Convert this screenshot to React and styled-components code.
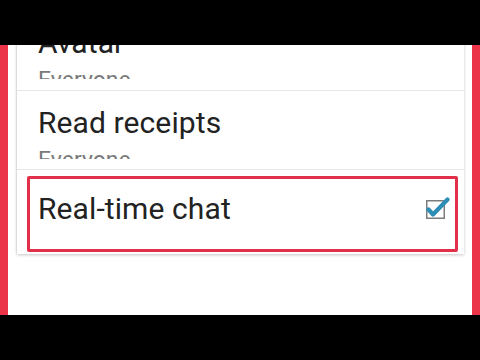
import React from "react";
import styled, { createGlobalStyle } from "styled-components";

const Global = createGlobalStyle`
  html, body {
    margin: 0;
    padding: 0;
    background: #000;
  }
  body {
    font-family: Roboto, "Noto Sans", sans-serif;
  }
`;

const Screen = styled.div`
  width: 480px;
  height: 360px;
  display: flex;
  flex-direction: column;
  background: #000;
  overflow: hidden;
`;

const BlackBar = styled.div`
  height: 45px;
  flex: none;
  background: #000;
`;

const Frame = styled.div`
  flex: 1;
  border-left: 8px solid #ec3448;
  border-right: 8px solid #ec3448;
  background: #fff;
  overflow: hidden;
  padding: 0 8px 0 9px;
`;

const Card = styled.div`
  margin-top: -34px;
  background: #fff;
  box-shadow: 0 1px 3px rgba(0, 0, 0, 0.22), -1px 0 1px rgba(0, 0, 0, 0.06);
  display: flex;
  flex-direction: column;
`;

const Row = styled.div`
  position: relative;
  display: flex;
  align-items: flex-start;
  justify-content: space-between;
  height: ${(p) => p.$height}px;
  padding: ${(p) => p.$top}px 14px 0 21px;
  box-sizing: border-box;
  border-bottom: ${(p) => (p.$divider ? "1px solid #e4e7e4" : "none")};
`;

const Texts = styled.div`
  display: flex;
  flex-direction: column;
`;

const Title = styled.div`
  font-size: 30px;
  line-height: 36px;
  color: #222;
  letter-spacing: 0.1px;
`;

const Summary = styled.div`
  margin-top: 6px;
  height: 12px;
  overflow: hidden;
  font-size: 23px;
  line-height: 27px;
  color: #7a7a7a;
`;

const Highlight = styled.div`
  position: absolute;
  left: 10px;
  top: 6px;
  width: 431px;
  height: 76px;
  box-sizing: border-box;
  border: 3px solid #e3304a;
  border-radius: 2px;
  pointer-events: none;
`;

const Check = styled.svg`
  flex: none;
  margin-top: 5px;
`;

function CheckBox() {
  return (
    <Check width="26" height="24" viewBox="0 0 26 24">
      <rect x="2.75" y="4.75" width="17.5" height="17.5" fill="#fff" stroke="#7d7d7d" strokeWidth="1.5" />
      <polyline
        points="4.5,13.5 9,18.5 23.5,3.5"
        fill="none"
        stroke="#2e8db5"
        strokeWidth="4.2"
        strokeLinecap="round"
        strokeLinejoin="round"
      />
    </Check>
  );
}

export default function App() {
  return (
    <Screen>
      <Global />
      <BlackBar />
      <Frame>
        <Card>
          <Row $height={80} $top={14} $divider>
            <Texts>
              <Title>Avatar</Title>
              <Summary>Everyone</Summary>
            </Texts>
          </Row>
          <Row $height={79} $top={14} $divider>
            <Texts>
              <Title>Read receipts</Title>
              <Summary>Everyone</Summary>
            </Texts>
          </Row>
          <Row $height={84} $top={21}>
            <Title>Real-time chat</Title>
            <CheckBox />
            <Highlight />
          </Row>
        </Card>
      </Frame>
      <BlackBar />
    </Screen>
  );
}
